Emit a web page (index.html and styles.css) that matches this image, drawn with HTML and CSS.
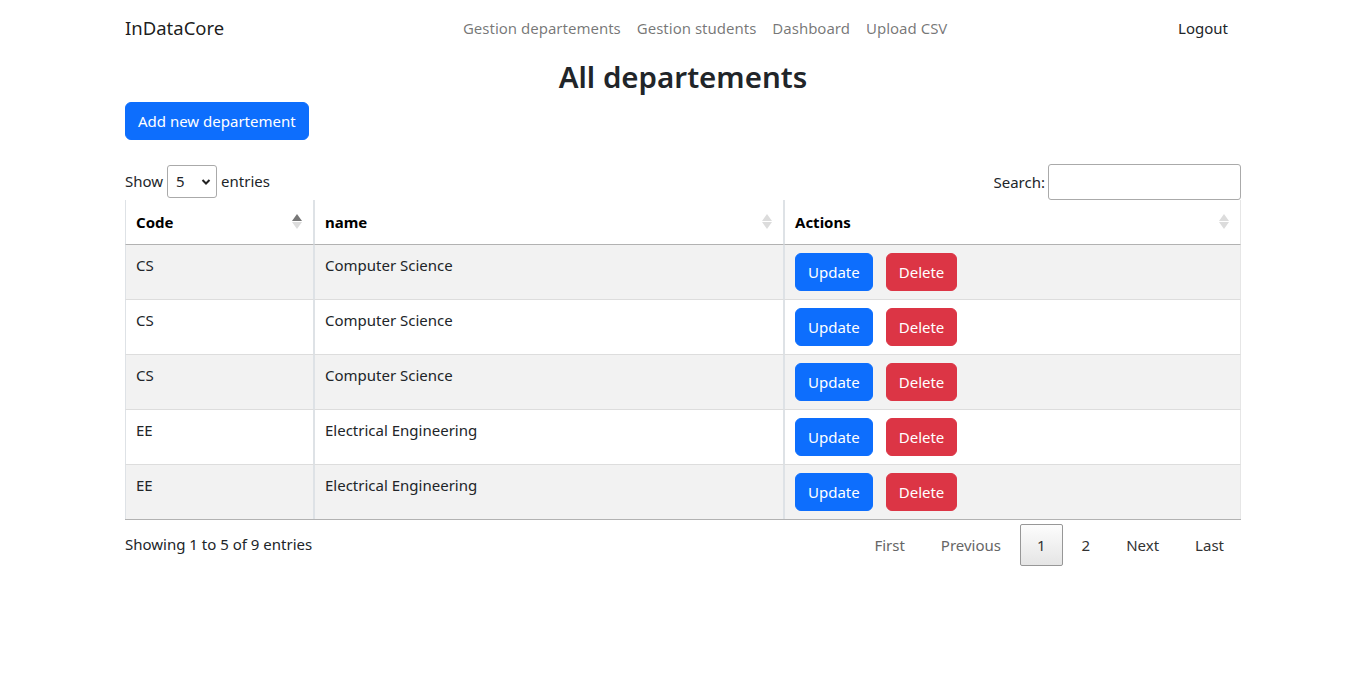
FILE: index.html
```html
<!DOCTYPE html>
<html lang="en">
<head>
<meta charset="utf-8">
<title>InDataCore - All departements</title>
<link rel="stylesheet" href="styles.css">
</head>
<body>
<nav class="navbar">
  <div class="container nav-inner">
    <a class="brand" href="#">InDataCore</a>
    <ul class="nav-links nav-center">
      <li><a class="nav-link" href="#">Gestion departements</a></li>
      <li><a class="nav-link" href="#">Gestion students</a></li>
      <li><a class="nav-link" href="#">Dashboard</a></li>
      <li><a class="nav-link" href="#">Upload CSV</a></li>
    </ul>
    <ul class="nav-links nav-right">
      <li><a class="nav-link logout" href="#">Logout</a></li>
    </ul>
  </div>
</nav>

<main class="container">
  <h2 class="page-title">All departements</h2>
  <a class="btn btn-primary" href="#">Add new departement</a>

  <div class="dt-wrapper">
    <div class="dt-top">
      <label class="dt-length">Show
        <span class="select-wrap">
          <select class="dt-select">
            <option>5</option>
            <option>10</option>
            <option>25</option>
          </select>
          <svg class="chev" width="10" height="8" viewBox="0 0 10 8"><path d="M1.5 2 L5 5.5 L8.5 2" fill="none" stroke="#222" stroke-width="2"/></svg>
        </span>
        entries</label>
      <label class="dt-search">Search:<input class="dt-input" type="search"></label>
    </div>

    <table class="dt-table">
      <colgroup>
        <col class="col-code">
        <col class="col-name">
        <col class="col-actions">
      </colgroup>
      <thead>
        <tr>
          <th class="sortable sorted-asc">Code</th>
          <th class="sortable">name</th>
          <th class="sortable">Actions</th>
        </tr>
      </thead>
      <tbody>
        <tr class="odd">
          <td>CS</td>
          <td>Computer Science</td>
          <td><div class="actions"><a class="btn btn-primary" href="#">Update</a><a class="btn btn-danger" href="#">Delete</a></div></td>
        </tr>
        <tr>
          <td>CS</td>
          <td>Computer Science</td>
          <td><div class="actions"><a class="btn btn-primary" href="#">Update</a><a class="btn btn-danger" href="#">Delete</a></div></td>
        </tr>
        <tr class="odd">
          <td>CS</td>
          <td>Computer Science</td>
          <td><div class="actions"><a class="btn btn-primary" href="#">Update</a><a class="btn btn-danger" href="#">Delete</a></div></td>
        </tr>
        <tr>
          <td>EE</td>
          <td>Electrical Engineering</td>
          <td><div class="actions"><a class="btn btn-primary" href="#">Update</a><a class="btn btn-danger" href="#">Delete</a></div></td>
        </tr>
        <tr class="odd">
          <td>EE</td>
          <td>Electrical Engineering</td>
          <td><div class="actions"><a class="btn btn-primary" href="#">Update</a><a class="btn btn-danger" href="#">Delete</a></div></td>
        </tr>
      </tbody>
    </table>

    <div class="dt-bottom">
      <div class="dt-info">Showing 1 to 5 of 9 entries</div>
      <div class="dt-paginate">
        <a class="page-btn disabled">First</a>
        <a class="page-btn disabled">Previous</a>
        <a class="page-btn current">1</a>
        <a class="page-btn">2</a>
        <a class="page-btn">Next</a>
        <a class="page-btn">Last</a>
      </div>
    </div>
  </div>
</main>
</body>
</html>
```

FILE: styles.css
```css
* { box-sizing: border-box; }

html, body {
  margin: 0;
  padding: 0;
  background: #fff;
}

body {
  font-family: "Segoe UI", "Noto Sans", "Open Sans", sans-serif;
  font-size: 15px;
  line-height: 24px;
  color: #212529;
}

a { text-decoration: none; }

.container {
  width: 1116px;
  margin: 0 auto;
}

/* Navbar */
.navbar {
  padding: 8px 0;
}

.nav-inner {
  display: flex;
  align-items: center;
}

.brand {
  font-size: 18.5px;
  line-height: 30px;
  padding: 5px 0;
  margin-right: 16px;
  color: rgba(0, 0, 0, 0.9);
}

.nav-links {
  list-style: none;
  display: flex;
  margin: 0;
  padding: 0;
}

.nav-center {
  margin: 0 auto;
}

.nav-link {
  display: block;
  padding: 8px;
  color: rgba(0, 0, 0, 0.55);
}

.nav-link.logout {
  color: #212529;
  margin-right: 5px;
}

/* Title */
.page-title {
  margin: 2px 0 6px;
  font-size: 29.5px;
  line-height: 38px;
  font-weight: 600;
  text-align: center;
}

/* Buttons */
.btn {
  display: inline-block;
  padding: 6px 12px;
  font-size: 15px;
  line-height: 24px;
  border: 1px solid transparent;
  border-radius: 6px;
  color: #fff;
  text-align: center;
  vertical-align: middle;
}

.btn-primary {
  background: #0d6efd;
  border-color: #0d6efd;
}

.btn-danger {
  background: #dc3545;
  border-color: #dc3545;
}

/* DataTables wrapper */
.dt-wrapper {
  margin-top: 24px;
}

.dt-top {
  display: flex;
  justify-content: space-between;
  align-items: flex-start;
}

.dt-length {
  display: flex;
  align-items: center;
  height: 34px;
}

.select-wrap {
  position: relative;
  display: inline-block;
  margin: 0 4px;
}

.dt-select {
  display: block;
  appearance: none;
  -webkit-appearance: none;
  width: 50px;
  height: 33px;
  border: 1px solid #aaa;
  border-radius: 3px;
  background: #fff;
  padding: 0 0 0 8px;
  font-family: inherit;
  font-size: 15px;
  color: #212529;
}

.chev {
  position: absolute;
  right: 6px;
  top: 13px;
  pointer-events: none;
}

.dt-search {
  display: flex;
  align-items: center;
}

.dt-input {
  width: 193px;
  height: 36px;
  margin-left: 3px;
  border: 1px solid #aaa;
  border-radius: 3px;
  padding: 4px;
  font-family: inherit;
  font-size: 15px;
  background: #fff;
}

/* Table */
.dt-table {
  width: 100%;
  border-collapse: separate;
  border-spacing: 0;
  table-layout: fixed;
  border-bottom: 1px solid rgba(0, 0, 0, 0.3);
}

.col-code { width: 189px; }
.col-name { width: 470px; }
.col-actions { width: 457px; }

.dt-table th,
.dt-table td {
  text-align: left;
  vertical-align: top;
  border-right: 1px solid #dee2e6;
}

.dt-table th:first-child,
.dt-table td:first-child {
  border-left: 1px solid #dee2e6;
}

.dt-table th:not(:first-child),
.dt-table td:not(:first-child) {
  border-left: 1px solid #dee2e6;
}

.dt-table th:last-child,
.dt-table td:last-child {
  border-right: 1px solid #e6e6e6;
}

.dt-table th {
  position: relative;
  padding: 10px 18px 10px 10px;
  font-weight: 700;
  border-bottom: 1px solid rgba(0, 0, 0, 0.3);
  color: #000;
}

.dt-table td {
  padding: 8px 10px;
  border-top: 1px solid #ddd;
}

.dt-table tbody tr:first-child td {
  border-top: none;
}

.dt-table tbody tr.odd td {
  background: #f2f2f2;
}

.actions {
  display: flex;
  gap: 13px;
}

/* Sort icons */
.sortable::before,
.sortable::after {
  content: "";
  position: absolute;
  right: 11px;
  width: 0;
  height: 0;
  border-left: 5px solid transparent;
  border-right: 5px solid transparent;
}

.sortable::before {
  bottom: 50%;
  margin-bottom: 1px;
  border-bottom: 7px solid #dcdcdc;
}

.sortable::after {
  top: 50%;
  margin-top: 0;
  border-top: 7px solid #dcdcdc;
}

.sorted-asc::before {
  border-bottom-color: #777;
}

/* Bottom */
.dt-bottom {
  display: flex;
  justify-content: space-between;
  align-items: flex-start;
}

.dt-info {
  padding-top: 12px;
}

.dt-paginate {
  display: flex;
  padding-top: 4px;
}

.page-btn {
  display: block;
  padding: 8px 16px;
  margin-left: 2px;
  border: 1px solid transparent;
  border-radius: 2px;
  color: #333;
  cursor: pointer;
}

.page-btn.disabled {
  color: #666;
}

.page-btn.current {
  border-color: #979797;
  background: linear-gradient(to bottom, rgba(230,230,230,0.1) 0%, rgba(0,0,0,0.1) 100%);
}
```
